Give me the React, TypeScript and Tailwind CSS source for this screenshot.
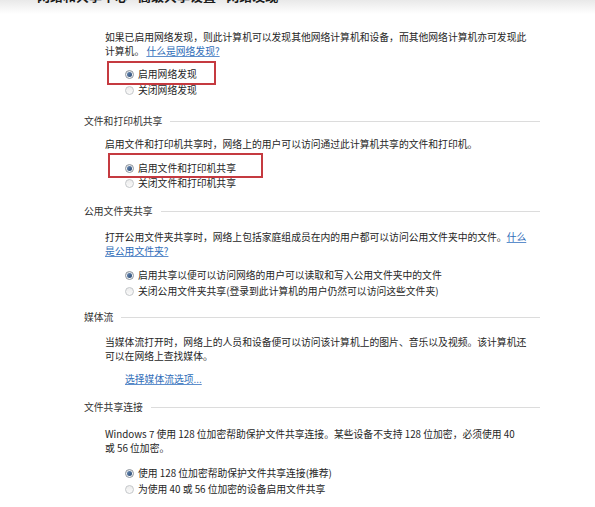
import React from "react";

const font = { fontFamily: '"Noto Sans CJK SC", "Noto Sans", sans-serif' };

function Radio({ checked }: { checked?: boolean }) {
  return checked ? (
    <span className="flex h-[9px] w-[9px] shrink-0 items-center justify-center rounded-full border border-[#8d949c] bg-gradient-to-b from-[#e4e7ea] to-white">
      <span className="h-[5px] w-[5px] rounded-full bg-gradient-to-br from-[#6f8fb8] to-[#24456f]" />
    </span>
  ) : (
    <span className="h-[9px] w-[9px] shrink-0 rounded-full border border-[#c4c7ca] bg-gradient-to-b from-[#ececec] to-[#fafafa]" />
  );
}

function RadioRow({ checked, children, className = "" }: { checked?: boolean; children: React.ReactNode; className?: string }) {
  return (
    <div className={`flex h-[16px] items-center gap-[4px] whitespace-nowrap ${className}`}>
      <Radio checked={checked} />
      <span>{children}</span>
    </div>
  );
}

function Header({ title, className = "" }: { title: string; className?: string }) {
  return (
    <div className={`ml-[84px] mr-[55px] flex h-[14px] items-center gap-[8px] text-[#333] ${className}`}>
      <span className="whitespace-nowrap leading-[14px]">{title}</span>
      <span className="h-px flex-1 bg-[#dcdcdc]" />
    </div>
  );
}

const Link = ({ children }: { children: React.ReactNode }) => (
  <span className="text-[#2f6db8] underline decoration-[#5f8fcc] underline-offset-[1px]">{children}</span>
);

export default function App() {
  return (
    <div
      className="relative h-[507px] w-[595px] overflow-hidden bg-white text-[9.8px] text-[#262626]"
      style={font}
    >
      {/* top cut-off bar */}
      <div className="h-[14px] bg-gradient-to-b from-[#e9e9e9] to-white">
        <div className="ml-[37px] h-[3px] overflow-hidden">
          <div className="-mt-[11px] whitespace-nowrap text-[13px] font-bold leading-[14px] text-[#1a1a1a]">
            网络和共享中心 › 高级共享设置 › 网络发现
          </div>
        </div>
      </div>

      {/* section 1 */}
      <div className="ml-[105px] mt-[16px] whitespace-nowrap leading-[14px]">
        如果已启用网络发现，则此计算机可以发现其他网络计算机和设备，而其他网络计算机亦可发现此
        <br />
        计算机。 <Link>什么是网络发现?</Link>
      </div>
      <div className="ml-[107px] mt-[3px] w-[109px] border-2 border-[#c53a40] pb-[1px] pl-[16px] pt-[3px]">
        <RadioRow checked>启用网络发现</RadioRow>
      </div>
      <RadioRow className="-mt-[3px] ml-[125px]">关闭网络发现</RadioRow>

      {/* section 2 */}
      <Header title="文件和打印机共享" className="mt-[16px]" />
      <div className="ml-[105px] mt-[9px] whitespace-nowrap leading-[14px]">
        启用文件和打印机共享时，网络上的用户可以访问通过此计算机共享的文件和打印机。
      </div>
      <div className="ml-[108px] mt-[2px] w-[155px] border-2 border-[#c53a40] pl-[15px] pt-[5px]">
        <RadioRow checked>启用文件和打印机共享</RadioRow>
      </div>
      <RadioRow className="-mt-[3px] ml-[125px]">关闭文件和打印机共享</RadioRow>

      {/* section 3 */}
      <Header title="公用文件夹共享" className="mt-[13px]" />
      <div className="ml-[105px] mt-[12px] whitespace-nowrap leading-[14px]">
        打开公用文件夹共享时，网络上包括家庭组成员在内的用户都可以访问公用文件夹中的文件。<Link>什么</Link>
        <br />
        <Link>是公用文件夹?</Link>
      </div>
      <div className="ml-[125px] mt-[9px]">
        <RadioRow checked>启用共享以便可以访问网络的用户可以读取和写入公用文件夹中的文件</RadioRow>
        <RadioRow>关闭公用文件夹共享(登录到此计算机的用户仍然可以访问这些文件夹)</RadioRow>
      </div>

      {/* section 4 */}
      <Header title="媒体流" className="mt-[11px]" />
      <div className="ml-[105px] mt-[11px] whitespace-nowrap leading-[14px]">
        当媒体流打开时，网络上的人员和设备便可以访问该计算机上的图片、音乐以及视频。该计算机还
        <br />
        可以在网络上查找媒体。
      </div>
      <div className="ml-[125px] mt-[9px] leading-[14px]">
        <Link>选择媒体流选项...</Link>
      </div>

      {/* section 5 */}
      <Header title="文件共享连接" className="mt-[14px]" />
      <div className="ml-[105px] mt-[13px] whitespace-nowrap leading-[14px]">
        Windows 7 使用 128 位加密帮助保护文件共享连接。某些设备不支持 128 位加密，必须使用 40
        <br />
        或 56 位加密。
      </div>
      <div className="ml-[125px] mt-[10px]">
        <RadioRow checked className="h-[15px]">使用 128 位加密帮助保护文件共享连接(推荐)</RadioRow>
        <RadioRow className="h-[15px]">为使用 40 或 56 位加密的设备启用文件共享</RadioRow>
      </div>
    </div>
  );
}
